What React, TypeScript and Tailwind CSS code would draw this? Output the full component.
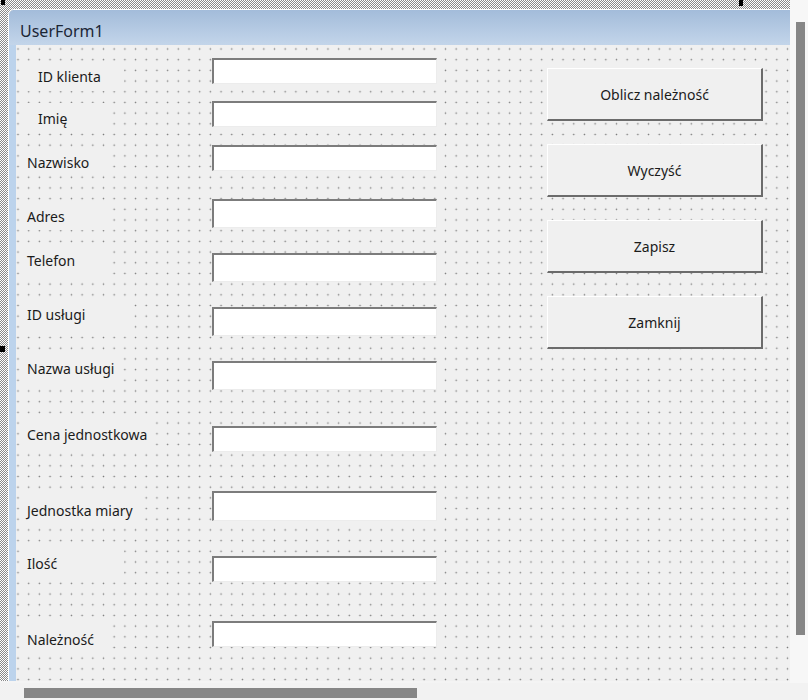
import React from 'react';

type Row = {
  label: string;
  rowH: string;
  labelCls: string;
  boxCls: string;
};

const rows: Row[] = [
  { label: 'ID klienta', rowH: 'h-[43px]', labelCls: 'mt-[3px] pl-[14px] w-[100px] h-[30px]', boxCls: 'h-[26px]' },
  { label: 'Imię', rowH: 'h-[44px]', labelCls: 'mt-[2px] pl-[14px] w-[86px] h-[30px]', boxCls: 'h-[26px]' },
  { label: 'Nazwisko', rowH: 'h-[54px]', labelCls: 'mt-[5px] pl-[3px] w-[86px] h-[24px]', boxCls: 'h-[26px]' },
  { label: 'Adres', rowH: 'h-[54px]', labelCls: 'mt-[3px] pl-[3px] w-[86px] h-[28px]', boxCls: 'h-[29px]' },
  { label: 'Telefon', rowH: 'h-[54px]', labelCls: '-mt-[8px] pl-[3px] w-[86px] h-[30px]', boxCls: 'h-[29px]' },
  { label: 'ID usługi', rowH: 'h-[54px]', labelCls: '-mt-[8px] pl-[3px] w-[108px] h-[30px]', boxCls: 'h-[29px]' },
  { label: 'Nazwa usługi', rowH: 'h-[65px]', labelCls: '-mt-[7px] pl-[3px] w-[96px] h-[28px]', boxCls: 'h-[29px]' },
  { label: 'Cena jednostkowa', rowH: 'h-[65px]', labelCls: '-mt-[7px] pl-[3px] w-[124px] h-[30px]', boxCls: 'h-[26px]' },
  { label: 'Jednostka miary', rowH: 'h-[65px]', labelCls: 'mt-[4px] pl-[3px] w-[114px] h-[30px]', boxCls: 'h-[30px]' },
  { label: 'Ilość', rowH: 'h-[65px]', labelCls: '-mt-[8px] pl-[3px] w-[100px] h-[30px]', boxCls: 'h-[26px]' },
  { label: 'Należność', rowH: 'h-[60px]', labelCls: 'mt-[3px] pl-[3px] w-[86px] h-[30px]', boxCls: 'h-[26px]' },
];

const buttons = ['Oblicz należność', 'Wyczyść', 'Zapisz', 'Zamknij'];

const App: React.FC = () => {
  return (
    <div className="w-[808px] h-[700px] bg-[#f4f4f4] flex flex-col overflow-hidden font-['Noto_Sans','Liberation_Sans',sans-serif] text-[#1b1b1b]">
      <div className="flex h-[683px]">
        {/* design surface with hatched selection frame */}
        <div className="relative w-[790px] h-[681px] pt-[9px] pl-[8px] bg-[repeating-conic-gradient(#8a8a8a_0_25%,#ffffff_0_50%)] bg-[length:2px_2px]">
          <div className="absolute left-[1px] top-0 w-[4px] h-[5px] bg-black" />
          <div className="absolute left-[739px] top-0 w-[4px] h-[6px] bg-black" />
          <div className="absolute left-0 top-[346px] w-[5px] h-[6px] bg-black" />

          {/* UserForm */}
          <div className="w-full h-full flex flex-col rounded-tl-[6px] overflow-hidden border-l border-t border-white">
            <div className="h-[35px] flex items-center pl-[11px] pt-[6px] text-[16px] text-[#1c2636] bg-gradient-to-b from-[#a3bcda] to-[#c3d5ea]">
              UserForm1
            </div>
            <div className="flex flex-1">
              <div className="w-[7px] bg-[#bcd3ec]" />
              <div className="flex-1 flex pl-[8px] pt-[13px] bg-[#f0f0f0] bg-[radial-gradient(circle,#7d7d7d_0.6px,transparent_1.1px)] bg-[length:10.7px_10.7px] bg-[position:-3.35px_-1.35px]">
                {/* labels and text boxes */}
                <div className="w-[413px] flex flex-col text-[14px]">
                  {rows.map((r) => (
                    <div key={r.label} className={`flex items-start ${r.rowH}`}>
                      <div className="w-[188px] flex">
                        <div className={`bg-[#f0f0f0] flex items-center ${r.labelCls}`}>{r.label}</div>
                      </div>
                      <div
                        className={`w-[225px] bg-white border-t-2 border-l-2 border-t-[#7c7c7c] border-l-[#7c7c7c] border-r border-b border-r-[#ececec] border-b-[#ececec] ${r.boxCls}`}
                      />
                    </div>
                  ))}
                </div>

                {/* command buttons */}
                <div className="ml-[110px] pt-[10px] flex flex-col gap-[23px]">
                  {buttons.map((b) => (
                    <div
                      key={b}
                      className="w-[216px] h-[53px] flex items-center justify-center text-[14px] bg-[#f0f0f0] border-t border-l border-t-white border-l-white border-r-2 border-b-2 border-r-[#6b6b6b] border-b-[#6b6b6b]"
                    >
                      {b}
                    </div>
                  ))}
                </div>
              </div>
            </div>
          </div>
        </div>

        {/* vertical scrollbar */}
        <div className="flex-1 flex pl-[6px] pt-[22px] bg-[#f7f7f7]">
          <div className="w-[9px] h-[613px] bg-[#868686]" />
        </div>
      </div>

      {/* horizontal scrollbar */}
      <div className="flex-1 pl-[24px] pt-[5px] bg-[#f2f2f2]">
        <div className="w-[393px] h-[10px] bg-[#868686]" />
      </div>
    </div>
  );
};

export default App;
